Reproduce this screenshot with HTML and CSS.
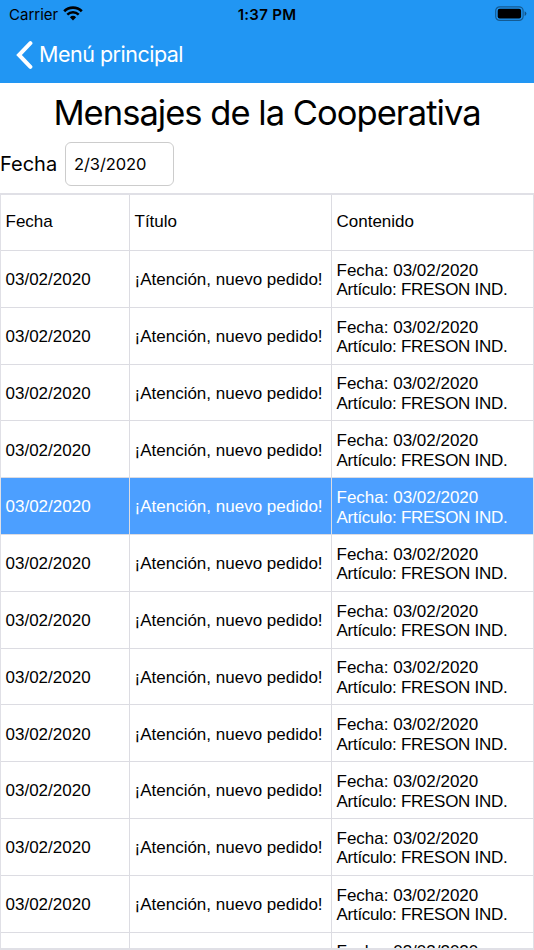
FILE: index.html
```html
<!DOCTYPE html>
<html lang="es">

<head>
    <meta charset="UTF-8">
    <meta name="viewport" content="width=device-width, initial-scale=1.0">
    <title>Mensajes de la Cooperativa</title>
    <link rel="stylesheet" href="styles.css">
</head>

<body>
    <header class="top">
        <div class="status-bar">
            <div class="carrier">
                <span class="carrier-name">Carrier</span>
                <svg class="wifi" width="20" height="15" viewBox="0 0 20 15">
                    <path d="M1.2 5.3 A12.6 12.6 0 0 1 18.8 5.3" fill="none" stroke="#000" stroke-width="2.7" />
                    <path d="M4.3 8.6 A8.2 8.2 0 0 1 15.7 8.6" fill="none" stroke="#000" stroke-width="2.5" />
                    <path d="M10 14.4 L6.9 11.3 A4.5 4.5 0 0 1 13.1 11.3 Z" />
                </svg>
            </div>
            <div class="clock">1:37 PM</div>
            <svg class="battery" width="32" height="16" viewBox="0 0 32 16">
                <rect x="0.7" y="0.8" width="27.4" height="13.6" rx="4" fill="none" stroke="#000" stroke-opacity="0.4" stroke-width="1.2" />
                <rect x="2.7" y="2.8" width="23.4" height="9.6" rx="2" />
                <path d="M29.6 5.2 Q31.4 6 31.4 7.6 Q31.4 9.2 29.6 10 Z" fill-opacity="0.45" />
            </svg>
        </div>
        <nav class="nav-bar">
            <svg class="back-icon" width="18" height="28" viewBox="0 0 18 28">
                <path d="M14.4 2.2 L3 14 L14.4 25.8" fill="none" stroke="#fff" stroke-width="4" stroke-linecap="round" />
            </svg>
            <a class="back-label">Menú principal</a>
        </nav>
    </header>

    <main class="content">
        <h1 class="title">Mensajes de la Cooperativa</h1>

        <div class="filter">
            <label class="filter-label">Fecha</label>
            <div class="date-input">2/3/2020</div>
        </div>

        <div class="grid">
            <div class="row header">
                <div class="cell">Fecha</div>
                <div class="cell">Título</div>
                <div class="cell">Contenido</div>
            </div>
            <div class="row">
                <div class="cell">03/02/2020</div>
                <div class="cell">¡Atención, nuevo pedido!</div>
                <div class="cell message"><p>Fecha: 03/02/2020</p><p class="item">Artículo: FRESON IND.</p></div>
            </div>
            <div class="row">
                <div class="cell">03/02/2020</div>
                <div class="cell">¡Atención, nuevo pedido!</div>
                <div class="cell message"><p>Fecha: 03/02/2020</p><p class="item">Artículo: FRESON IND.</p></div>
            </div>
            <div class="row">
                <div class="cell">03/02/2020</div>
                <div class="cell">¡Atención, nuevo pedido!</div>
                <div class="cell message"><p>Fecha: 03/02/2020</p><p class="item">Artículo: FRESON IND.</p></div>
            </div>
            <div class="row">
                <div class="cell">03/02/2020</div>
                <div class="cell">¡Atención, nuevo pedido!</div>
                <div class="cell message"><p>Fecha: 03/02/2020</p><p class="item">Artículo: FRESON IND.</p></div>
            </div>
            <div class="row selected">
                <div class="cell">03/02/2020</div>
                <div class="cell">¡Atención, nuevo pedido!</div>
                <div class="cell message"><p>Fecha: 03/02/2020</p><p class="item">Artículo: FRESON IND.</p></div>
            </div>
            <div class="row">
                <div class="cell">03/02/2020</div>
                <div class="cell">¡Atención, nuevo pedido!</div>
                <div class="cell message"><p>Fecha: 03/02/2020</p><p class="item">Artículo: FRESON IND.</p></div>
            </div>
            <div class="row">
                <div class="cell">03/02/2020</div>
                <div class="cell">¡Atención, nuevo pedido!</div>
                <div class="cell message"><p>Fecha: 03/02/2020</p><p class="item">Artículo: FRESON IND.</p></div>
            </div>
            <div class="row">
                <div class="cell">03/02/2020</div>
                <div class="cell">¡Atención, nuevo pedido!</div>
                <div class="cell message"><p>Fecha: 03/02/2020</p><p class="item">Artículo: FRESON IND.</p></div>
            </div>
            <div class="row">
                <div class="cell">03/02/2020</div>
                <div class="cell">¡Atención, nuevo pedido!</div>
                <div class="cell message"><p>Fecha: 03/02/2020</p><p class="item">Artículo: FRESON IND.</p></div>
            </div>
            <div class="row">
                <div class="cell">03/02/2020</div>
                <div class="cell">¡Atención, nuevo pedido!</div>
                <div class="cell message"><p>Fecha: 03/02/2020</p><p class="item">Artículo: FRESON IND.</p></div>
            </div>
            <div class="row">
                <div class="cell">03/02/2020</div>
                <div class="cell">¡Atención, nuevo pedido!</div>
                <div class="cell message"><p>Fecha: 03/02/2020</p><p class="item">Artículo: FRESON IND.</p></div>
            </div>
            <div class="row">
                <div class="cell">03/02/2020</div>
                <div class="cell">¡Atención, nuevo pedido!</div>
                <div class="cell message"><p>Fecha: 03/02/2020</p><p class="item">Artículo: FRESON IND.</p></div>
            </div>
            <div class="row">
                <div class="cell"></div>
                <div class="cell"></div>
                <div class="cell message"><p>Fecha: 03/02/2020</p><p class="item">&nbsp;</p></div>
            </div>
        </div>
    </main>
</body>

</html>
```
FILE: styles.css
```css
* {
    margin: 0;
    padding: 0;
    box-sizing: border-box;
}

body {
    display: flex;
    flex-direction: column;
    height: 100vh;
    overflow: hidden;
    background: #ffffff;
    color: #000000;
    font-family: Inter, sans-serif;
}

.top {
    flex: none;
    height: 83px;
    background: #2196f3;
}

.status-bar {
    display: grid;
    grid-template-columns: 1fr auto 1fr;
    align-items: center;
    height: 28px;
    padding: 0 7px 0 9px;
    font-size: 15px;
}

.carrier {
    display: flex;
    align-items: center;
    gap: 5px;
}

.wifi {
    margin-top: -2px;
}

.clock {
    margin-left: -2px;
    font-weight: 600;
    letter-spacing: 0.3px;
}

.battery {
    justify-self: end;
}

.nav-bar {
    display: flex;
    align-items: center;
    height: 54px;
    padding-left: 16px;
    color: #ffffff;
}

.back-label {
    margin: -2px 0 0 5px;
    font-size: 21.5px;
    letter-spacing: -0.5px;
}

.content {
    display: flex;
    flex-direction: column;
    flex: 1;
    min-height: 0;
}

.title {
    flex: none;
    height: 59px;
    line-height: 59px;
    font-size: 34.5px;
    font-weight: 400;
    letter-spacing: -0.97px;
    text-align: center;
    white-space: nowrap;
}

.filter {
    display: flex;
    flex: none;
    align-items: center;
    gap: 8px;
    height: 43px;
    margin-bottom: 8px;
}

.filter-label {
    width: 57px;
    font-size: 20px;
}

.date-input {
    width: 109px;
    height: 44px;
    padding-left: 8px;
    border: 1px solid #cccccc;
    border-radius: 6px;
    font-size: 16.5px;
    letter-spacing: -0.1px;
    line-height: 42px;
}

.grid {
    flex: 1;
    min-height: 0;
    overflow: hidden;
    border: 2px solid #e0e0e6;
    border-left-width: 1px;
    border-right-width: 1px;
    font-family: "Liberation Sans", Arial, sans-serif;
    font-size: 17px;
    line-height: 19.5px;
}

.row {
    display: grid;
    grid-template-columns: 129px 202px 1fr;
    height: 56.8px;
}

.cell {
    display: flex;
    align-items: center;
    padding: 2px 0 0 4.5px;
    border-right: 1px solid #dcdce2;
    border-bottom: 1px solid #dcdce2;
    white-space: nowrap;
}

.cell:last-child {
    border-right: none;
}

.header {
    height: 56px;
}

.header .cell {
    padding-top: 0;
    padding-bottom: 1px;
}

.message {
    flex-direction: column;
    align-items: flex-start;
    justify-content: center;
    padding-top: 3px;
}

.item {
    letter-spacing: -0.27px;
}

.selected {
    background: #4c9fff;
    color: #ffffff;
}
```
